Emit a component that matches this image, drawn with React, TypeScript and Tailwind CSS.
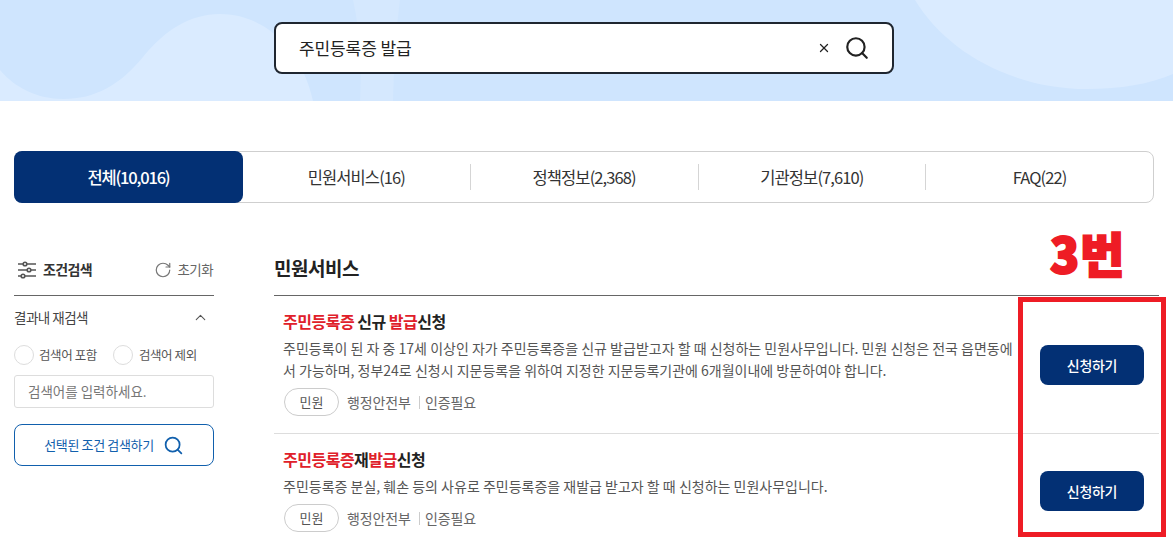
import { X, Search, ChevronUp, RotateCw } from "lucide-react";

const FONT = "font-['Noto_Sans_CJK_KR','Noto_Sans',sans-serif]";

function Hero() {
  return (
    <div className="relative h-[101px] bg-[#cfe5fe] overflow-hidden flex pl-[274px] pt-[22px]">
      <svg className="absolute inset-0" width="1173" height="101" viewBox="0 0 1173 101">
        <path d="M353 0 C360 30 362 70 360 101 L393 101 C394 65 396 30 400 0 Z" fill="#d5e8fe" />
        <path d="M0 70 C15 88 38 99 63 99 C95 99 120 85 143 57 C165 30 190 14 220 14 C265 14 302 50 313 101 L0 101 Z" fill="#daebff" />
        <path d="M915 0 C945 50 1010 89 1087 89 C1120 89 1150 84 1173 74 L1173 0 Z" fill="#daebff" />
      </svg>
      <div className="relative w-[620px] h-[52px] bg-white border-2 border-[#1f2630] rounded-[8px] flex items-center pl-[23px] pr-[22px]">
        <span className="text-[17px] tracking-[-0.1px] text-[#222]">주민등록증 발급</span>
        <X className="ml-auto mr-[13px] text-[#222]" size={14} strokeWidth={2.2} />
        <Search className="text-[#222]" size={26} strokeWidth={2} />
      </div>
    </div>
  );
}

function Tabs() {
  const rest = ["민원서비스(16)", "정책정보(2,368)", "기관정보(7,610)", "FAQ(22)"];
  return (
    <div className="ml-[14px] mr-[19px] mt-[50px] h-[52px] border border-[#cfcfcf] rounded-[8px] flex items-center text-[16.5px] tracking-[-0.9px] text-[#333]">
      <div className="w-[229px] h-[52px] -ml-px bg-[#033074] rounded-[8px] text-white flex items-center justify-center font-medium tracking-[-1.2px]">전체(10,016)</div>
      {rest.map((t, i) => (
        <div key={t} className={`flex-1 h-[26px] flex items-center justify-center ${i > 0 ? "border-l border-[#d5d5d5]" : ""}`}>{t}</div>
      ))}
    </div>
  );
}

function Sidebar() {
  return (
    <aside className="w-[200px] shrink-0 pt-[48px]">
      <div className="h-[45px] flex items-center border-b border-[#666] pb-[7px]">
        <svg width="20" height="20" viewBox="0 0 20 20" className="ml-[3px] text-[#555]" fill="none" stroke="currentColor" strokeWidth="1.6">
          <path d="M1 4H6M10 4H19M1 10H10M14 10H19M1 16H4M8 16H19" />
          <circle cx="8" cy="4" r="1.8" />
          <circle cx="12" cy="10" r="1.8" />
          <circle cx="6" cy="16" r="1.8" />
        </svg>
        <span className="ml-[6px] text-[14px] font-bold tracking-[-0.6px] text-[#333]">조건검색</span>
        <RotateCw className="ml-auto text-[#777]" size={18} strokeWidth={1.6} />
        <span className="ml-[6px] mr-px text-[13.5px] tracking-[-0.6px] text-[#666]">초기화</span>
      </div>
      <div className="h-[43px] flex items-center justify-between text-[13.5px] tracking-[-0.5px] text-[#444]">
        <span>결과내 재검색</span>
        <ChevronUp className="mr-[5px] text-[#555]" size={17} strokeWidth={1.5} />
      </div>
      <div className="mt-[6px] h-[20px] flex items-center text-[12.5px] tracking-[-0.4px] text-[#555]">
        <span className="w-[20px] h-[20px] rounded-full border border-[#ddd]" />
        <span className="ml-[5px]">검색어 포함</span>
        <span className="ml-[16px] w-[20px] h-[20px] rounded-full border border-[#ddd]" />
        <span className="ml-[6px]">검색어 제외</span>
      </div>
      <div className="mt-[10px] h-[33px] border border-[#ddd] rounded-[3px] flex items-center pl-[13px] text-[13.5px] text-[#777]">검색어를 입력하세요.</div>
      <div className="mt-[16px] h-[42px] border border-[#1160ad] rounded-[8px] flex items-center justify-center gap-[9px] text-[13px] tracking-[-0.35px] text-[#1160ad]">
        <span>선택된 조건 검색하기</span>
        <Search size={21} strokeWidth={2} />
      </div>
    </aside>
  );
}

function Meta() {
  return (
    <div className="mt-[7px] flex items-center h-[28px]">
      <span className="ml-px w-[55px] h-[28px] border border-[#ccc] rounded-full flex items-center justify-center text-[13px] text-[#555]">민원</span>
      <span className="ml-[8px] text-[14px] tracking-[-0.1px] text-[#666]">행정안전부</span>
      <span className="ml-[8px] w-px h-[13px] bg-[#ccc]" />
      <span className="ml-[5px] text-[14px] tracking-[-0.1px] text-[#666]">인증필요</span>
    </div>
  );
}

function Apply() {
  return (
    <div className="w-[104px] h-[40px] bg-[#033074] rounded-[8px] text-white text-[14px] tracking-[-0.3px] font-medium flex items-center justify-center">신청하기</div>
  );
}

function Results() {
  return (
    <section className="relative ml-[60px] w-[885px] pt-[48px]">
      <h2 className="h-[44px] pb-[10px] flex items-center text-[19px] font-bold tracking-[-0.5px] text-[#222]">민원서비스</h2>
      <div className="border-t border-[#666]">
        <div className="h-[138px] border-b border-[#ddd] pl-[9px] pt-[13px] flex">
          <div className="w-[735px] shrink-0">
            <div className="text-[16px] leading-[24px] font-bold tracking-[-0.5px] text-[#222]">
              <span className="text-[#e0202a]">주민등록증</span> 신규 <span className="text-[#e0202a]">발급</span>신청
            </div>
            <p className="mt-[4px] text-[14px] leading-[22px] text-[#555]">
              주민등록이 된 자 중 17세 이상인 자가 주민등록증을 신규 발급받고자 할 때 신청하는 민원사무입니다. 민원 신청은 전국 읍면동에서 가능하며, 정부24로 신청시 지문등록을 위하여 지정한 지문등록기관에 6개월이내에 방문하여야 합니다.
            </p>
            <Meta />
          </div>
          <div className="ml-[22px] mt-[36px]"><Apply /></div>
        </div>
        <div className="pl-[9px] pt-[13px] flex">
          <div className="w-[735px] shrink-0">
            <div className="text-[16px] leading-[24px] font-bold tracking-[-0.5px] text-[#222]">
              <span className="text-[#e0202a]">주민등록증</span>재<span className="text-[#e0202a]">발급</span>신청
            </div>
            <p className="mt-[4px] text-[14px] leading-[22px] text-[#555]">
              주민등록증 분실, 훼손 등의 사유로 주민등록증을 재발급 받고자 할 때 신청하는 민원사무입니다.
            </p>
            <Meta />
          </div>
          <div className="ml-[22px] mt-[24px]"><Apply /></div>
        </div>
      </div>
    </section>
  );
}

export default function App() {
  return (
    <div className={`relative w-[1173px] h-[543px] overflow-hidden bg-white ${FONT}`}>
      <Hero />
      <Tabs />
      <div className="flex pl-[14px]">
        <Sidebar />
        <Results />
      </div>
      <div className="absolute left-[1050px] top-[220px] text-[#ee1c25] text-[48px] leading-[64px] font-black tracking-[1px] [-webkit-text-stroke:2px_#ee1c25]">3번</div>
      <div className="absolute left-[1018px] top-[297px] w-[148px] h-[240px] border-[5px] border-[#ee1c25]" />
    </div>
  );
}
